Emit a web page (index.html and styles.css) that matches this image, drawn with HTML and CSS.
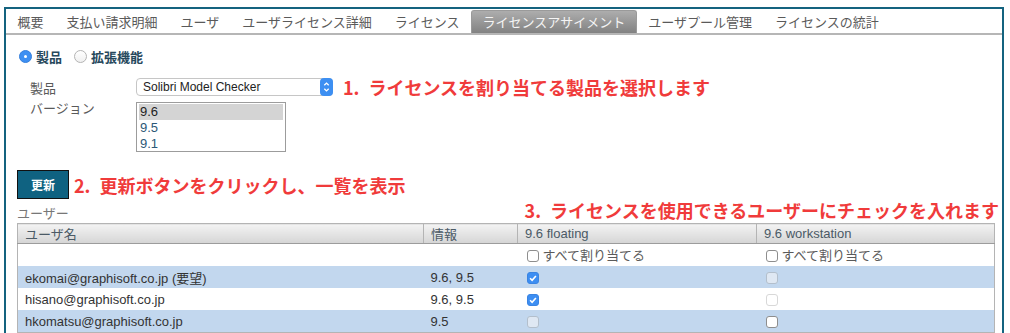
FILE: index.html
```html
<!DOCTYPE html>
<html>
<head>
<meta charset="UTF-8">
<title>ライセンスアサイメント</title>
<link rel="stylesheet" href="styles.css">
</head>
<body>
<div class="frame">
	<ul class="tabs">
		<li>概要</li>
		<li>支払い請求明細</li>
		<li>ユーザ</li>
		<li>ユーザライセンス詳細</li>
		<li>ライセンス</li>
		<li class="active">ライセンスアサイメント</li>
		<li>ユーザプール管理</li>
		<li>ライセンスの統計</li>
	</ul>
	<div class="content">
		<div class="kind">
			<span class="radio on"></span><b>製品</b>
			<span class="radio off"></span><b>拡張機能</b>
		</div>
		<div class="row row-select">
			<span class="label">製品</span>
			<div class="select">
				<span class="select-text">Solibri Model Checker</span>
				<span class="stepper">
					<svg width="13" height="18" viewBox="0 0 13 18"><path d="M4.3 7.3 L6.5 5.1 L8.7 7.3 M4.3 10.7 L6.5 12.9 L8.7 10.7" stroke="#fff" stroke-width="1.3" fill="none"/></svg>
				</span>
			</div>
			<span class="note note1"><span class="num">1.</span>ライセンスを割り当てる製品を選択します</span>
		</div>
		<div class="row row-top">
			<span class="label">バージョン</span>
			<ul class="listbox">
				<li class="sel">9.6</li>
				<li>9.5</li>
				<li>9.1</li>
			</ul>
		</div>
		<div class="refresh">
			<button class="btn">更新</button>
			<span class="note"><span class="num">2.</span>更新ボタンをクリックし、一覧を表示</span>
		</div>
		<div class="users-head">
			<span class="users-label">ユーザー</span>
			<span class="note note3"><span class="num">3.</span>ライセンスを使用できるユーザーにチェックを入れます</span>
		</div>
		<table class="grid">
			<colgroup>
				<col style="width:406px">
				<col style="width:94px">
				<col style="width:239px">
				<col style="width:238px">
			</colgroup>
			<tr>
				<th>ユーザ名</th>
				<th>情報</th>
				<th>9.6 floating</th>
				<th>9.6 workstation</th>
			</tr>
			<tr class="all">
				<td></td>
				<td></td>
				<td><span class="cb"></span>すべて割り当てる</td>
				<td><span class="cb"></span>すべて割り当てる</td>
			</tr>
			<tr class="blue">
				<td>ekomai@graphisoft.co.jp (要望)</td>
				<td>9.6, 9.5</td>
				<td><span class="cb checked"><svg width="12" height="12" viewBox="0 0 12 12"><path d="M3.1 6.3 L5.1 8.3 L8.9 3.9" stroke="#fff" stroke-width="1.6" fill="none"/></svg></span></td>
				<td><span class="cb dim"></span></td>
			</tr>
			<tr>
				<td>hisano@graphisoft.co.jp</td>
				<td>9.6, 9.5</td>
				<td><span class="cb checked"><svg width="12" height="12" viewBox="0 0 12 12"><path d="M3.1 6.3 L5.1 8.3 L8.9 3.9" stroke="#fff" stroke-width="1.6" fill="none"/></svg></span></td>
				<td><span class="cb faint"></span></td>
			</tr>
			<tr class="blue">
				<td>hkomatsu@graphisoft.co.jp</td>
				<td>9.5</td>
				<td><span class="cb dim"></span></td>
				<td><span class="cb"></span></td>
			</tr>
		</table>
	</div>
</div>
</body>
</html>
```

FILE: styles.css
```css
body{
	margin: 0;
	background: #fff;
	color: #333;
	font-family: "Liberation Sans", "Noto Sans CJK JP", sans-serif;
	font-size: 13px;
	height: 333px;
	overflow: hidden;
}
.frame{
	margin: 7px 6px 0 4px;
	border: 2px solid #14637f;
	border-bottom: none;
	height: 340px;
}
.tabs{
	list-style: none;
	margin: 0;
	padding: 0;
	display: flex;
	height: 24px;
	border-bottom: 2px solid #b6b6b6;
}
.tabs li{
	padding: 1px 11.5px 0;
	height: 23px;
	line-height: 23px;
	color: #5a5a5a;
	font-family: "Noto Sans CJK JP", sans-serif;
	font-size: 13px;
}
.tabs .active{
	margin-top: 1px;
	box-sizing: border-box;
	border: 1px solid #9a9a9a;
	border-bottom: none;
	border-radius: 3px 3px 0 0;
	padding: 0 10.5px;
	height: 23px;
	line-height: 22px;
	background: linear-gradient(#adadad, #828282);
	color: #f5f5f5;
}
.content{
	padding: 0 8px 0 11px;
}
.kind{
	margin-top: 13px;
	height: 16px;
	display: flex;
	align-items: center;
	font-family: "Noto Sans CJK JP", sans-serif;
}
.kind b{
	color: #26485c;
	font-size: 13px;
}
.radio{
	width: 13px;
	height: 13px;
	border-radius: 50%;
	box-sizing: border-box;
	margin: 0 4px 0 2px;
	position: relative;
}
.radio.on{
	background: #3d8ff2;
	border: 1px solid #3580dd;
}
.radio.on:after{
	content: "";
	position: absolute;
	left: 4px;
	top: 4px;
	width: 3px;
	height: 3px;
	border-radius: 50%;
	background: #fff;
}
.radio.off{
	margin-left: 12px;
	border: 1px solid #b4b4b4;
	background: linear-gradient(#fff, #f0f0f0);
}
.row{
	margin-top: 14px;
	display: flex;
	align-items: center;
}
.row-select{
	height: 18px;
}
.row-top{
	margin-top: 6px;
	align-items: flex-start;
}
.label{
	width: 106px;
	padding-left: 13px;
	color: #5a5a5a;
	font-family: "Noto Sans CJK JP", sans-serif;
	line-height: 13px;
}
.row-top .label{
	line-height: 12px;
}
.select{
	width: 197px;
	height: 18px;
	box-sizing: border-box;
	border: 1px solid #c6c6c6;
	border-radius: 4px;
	display: flex;
	align-items: center;
	font-size: 12px;
	color: #222;
}
.select-text{
	flex: 1;
	padding-left: 6px;
}
.stepper{
	width: 13px;
	height: 18px;
	margin: -1px -1px -1px 0;
	border-radius: 4px;
	background: #3d8ff2;
	display: flex;
}
.note{
	color: #f03b3b;
	font-family: "Noto Sans CJK JP", sans-serif;
	font-weight: 700;
	font-size: 18px;
	line-height: 22px;
	white-space: nowrap;
}
.num{
	margin-right: 9px;
}
.note1{
	margin-left: 10px;
}
.listbox{
	width: 150px;
	height: 50px;
	box-sizing: border-box;
	border: 1px solid #9c9c9c;
	margin: 0;
	padding: 1px 2px 0;
	list-style: none;
	overflow: hidden;
	font-size: 13px;
	color: #2c5877;
}
.listbox li{
	line-height: 16px;
	padding-left: 1px;
}
.listbox .sel{
	background: #d4d4d4;
	color: #222;
}
.refresh{
	margin-top: 18px;
	display: flex;
	align-items: center;
}
.btn{
	width: 52px;
	height: 29px;
	margin: 0 5px 0 0;
	padding: 0;
	border: 1px solid #111;
	background: #0f6281;
	color: #fff;
	font-family: "Noto Sans CJK JP", sans-serif;
	font-weight: 700;
	font-size: 12px;
}
.users-head{
	margin-top: 1px;
	height: 22px;
	display: flex;
	align-items: center;
}
.users-label{
	margin-top: 3px;
	color: #777;
	font-family: "Noto Sans CJK JP", sans-serif;
}
.note3{
	margin-left: auto;
	margin-right: -5px;
	margin-bottom: 3px;
}
.grid{
	margin-top: 1px;
	width: 977px;
	border-collapse: collapse;
	table-layout: fixed;
	border: 1px solid #b4b4b4;
}
.grid th{
	height: 19px;
	padding: 0 7px;
	text-align: left;
	font-weight: normal;
	color: #4b5a66;
	background: linear-gradient(#f3f3f3, #d5d5d5);
	border-left: 1px solid #b4b4b4;
	border-bottom: 1px solid #9c9c9c;
}
.grid td{
	height: 22px;
	padding: 0 7px;
	color: #333;
	white-space: nowrap;
}
.grid .all td{
	color: #5a5a5a;
	font-family: "Noto Sans CJK JP", sans-serif;
	vertical-align: top;
	padding-top: 1px;
	height: 21px;
}
.grid .blue td{
	background: #c2d7ee;
}
.cb{
	display: inline-block;
	width: 12px;
	height: 12px;
	box-sizing: border-box;
	border: 1px solid #8e8e8e;
	border-radius: 3px;
	background: #fff;
	margin: 0 4px 0 2px;
	vertical-align: middle;
}
.all .cb{
	vertical-align: -2px;
}
.cb svg{
	display: block;
	margin: -1px;
}
.cb.checked{
	background: #3d8ef2;
	border-color: #3a84e2;
}
.cb.dim{
	background: #dfe8f3;
	border-color: #b3bfcc;
}
.cb.faint{
	border-color: #d8d8d8;
}
```
